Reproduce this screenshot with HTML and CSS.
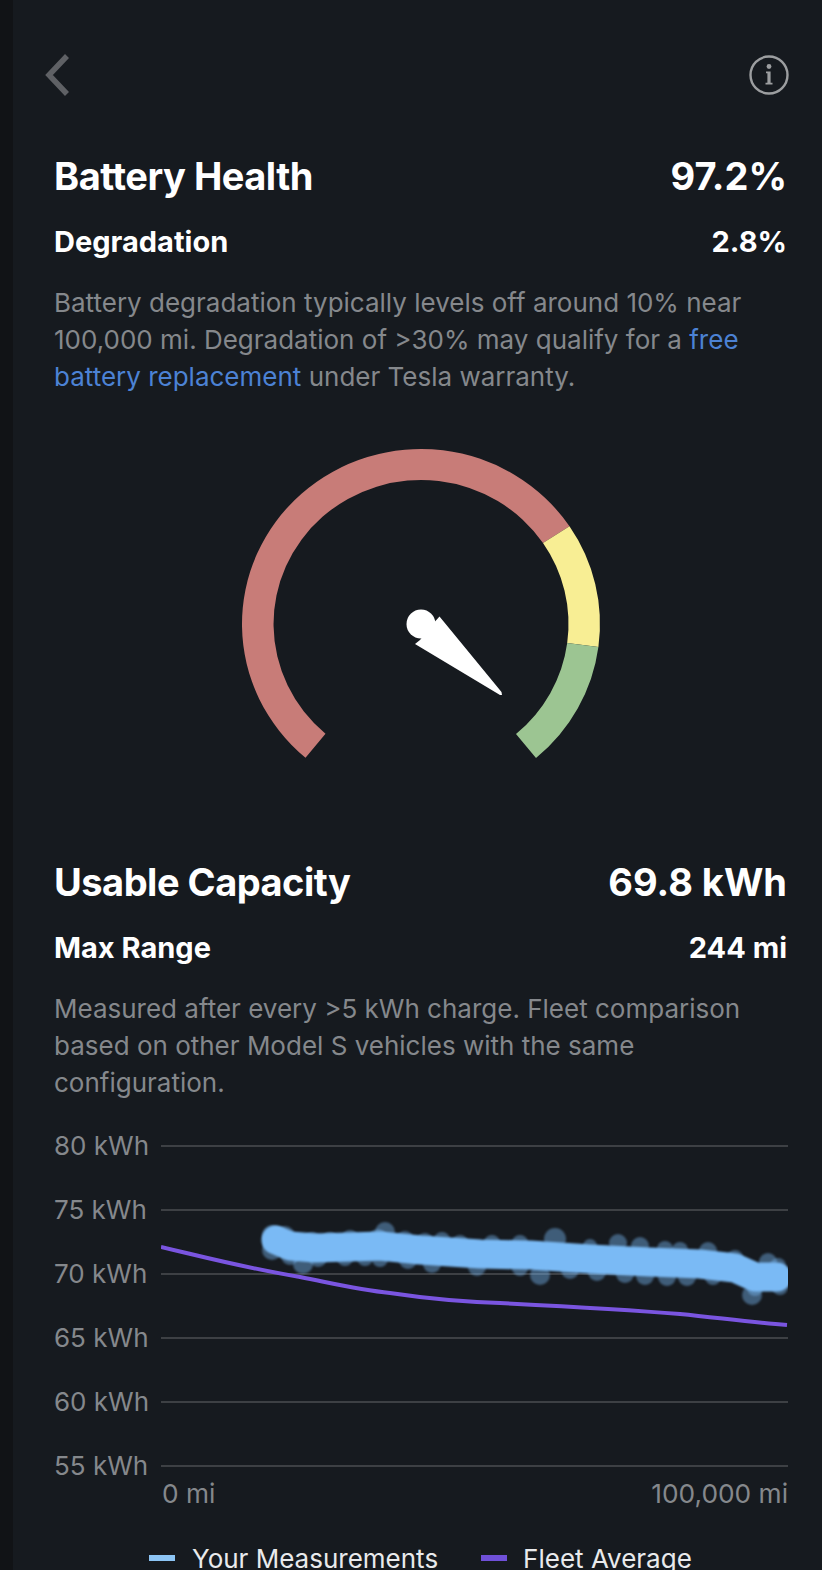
FILE: index.html
```html
<!DOCTYPE html>
<html lang="en">
<head>
<meta charset="utf-8">
<title>Battery Health</title>
<link rel="stylesheet" href="styles.css">
</head>
<body>
<main class="screen">
  <header class="topbar">
    <svg class="back-icon" viewBox="0 0 30 44" width="30" height="44"><polyline points="23,3 5,22 23,41"/></svg>
    <svg class="info-icon" viewBox="0 0 40 40" width="40" height="40">
      <circle class="info-ring" cx="20" cy="20" r="18.5"/>
      <circle class="info-mark" cx="20" cy="11.5" r="2.4"/>
      <path class="info-mark" d="M17 16.5h4.6v11.2h1.9v1.8h-7v-1.8h1.9v-9.4h-1.4z"/>
    </svg>
  </header>

  <section class="block block-first">
    <div class="title-row"><h1>Battery Health</h1><span>97.2%</span></div>
    <div class="sub-row"><h2>Degradation</h2><span>2.8%</span></div>
    <p class="note">Battery degradation typically levels off around 10% near 100,000 mi. Degradation of &gt;30% may qualify for a <a href="#">free battery replacement</a> under Tesla warranty.</p>
  </section>

  <svg class="gauge" viewBox="231 440 380 330" width="380" height="330">
    <path class="arc-red" d="M305.5 757.7 A179 175 0 1 1 569.5 526.3 L543 543 A147.5 144 0 1 0 325.5 733.7 Z"/>
    <path class="arc-yellow" d="M569.5 526.3 A179 175 0 0 1 598.4 647 L567.2 643 A147.5 144 0 0 0 543 543 Z"/>
    <path class="arc-green" d="M598.4 647 A179 175 0 0 1 536 758 L516 734 A147.5 144 0 0 0 567.2 643 Z"/>
    <circle class="needle" cx="421" cy="624" r="14.5"/>
    <polygon class="needle" points="439.5,616.5 501.5,692 502,695 500,695 415,644 420,640 435,621.5"/>
  </svg>

  <section class="block block-second">
    <div class="title-row"><h1>Usable Capacity</h1><span>69.8 kWh</span></div>
    <div class="sub-row"><h2>Max Range</h2><span>244 mi</span></div>
    <p class="note">Measured after every &gt;5 kWh charge. Fleet comparison based on other Model S vehicles with the same configuration.</p>
  </section>

  <section class="chart">
    <div class="chart-row"><span>80 kWh</span><i></i></div>
    <div class="chart-row"><span>75 kWh</span><i></i></div>
    <div class="chart-row"><span>70 kWh</span><i></i></div>
    <div class="chart-row"><span>65 kWh</span><i></i></div>
    <div class="chart-row"><span>60 kWh</span><i></i></div>
    <div class="chart-row"><span>55 kWh</span><i></i></div>
    <div class="axis"><span>0 mi</span><span>100,000 mi</span></div>

    <svg class="plot" viewBox="161 1134 627 344" width="627" height="344">
      <g class="dots">
        <circle cx="272" cy="1235" r="10"/><circle cx="285" cy="1236" r="10"/><circle cx="272" cy="1250" r="10"/><circle cx="290" cy="1256" r="9"/>
        <circle cx="303" cy="1264" r="10"/><circle cx="318" cy="1258" r="9"/><circle cx="312" cy="1240" r="8"/><circle cx="330" cy="1240" r="8"/>
        <circle cx="350" cy="1238" r="8"/><circle cx="345" cy="1258" r="8"/><circle cx="365" cy="1258" r="8"/><circle cx="385" cy="1232" r="10"/>
        <circle cx="378" cy="1238" r="9"/><circle cx="380" cy="1259" r="8"/><circle cx="405" cy="1239" r="8"/><circle cx="408" cy="1260" r="9"/>
        <circle cx="425" cy="1241" r="8"/><circle cx="432" cy="1264" r="9"/><circle cx="442" cy="1240" r="8"/><circle cx="460" cy="1243" r="8"/>
        <circle cx="477" cy="1267" r="9"/><circle cx="492" cy="1243" r="8"/><circle cx="520" cy="1243" r="8"/><circle cx="520" cy="1268" r="8"/>
        <circle cx="540" cy="1275" r="10"/><circle cx="555" cy="1239" r="11"/><circle cx="570" cy="1270" r="9"/><circle cx="590" cy="1246" r="7"/>
        <circle cx="597" cy="1272" r="9"/><circle cx="618" cy="1243" r="9"/><circle cx="625" cy="1274" r="9"/><circle cx="640" cy="1246" r="9"/>
        <circle cx="645" cy="1276" r="9"/><circle cx="665" cy="1249" r="8"/><circle cx="667" cy="1277" r="9"/><circle cx="680" cy="1250" r="8"/>
        <circle cx="687" cy="1277" r="9"/><circle cx="708" cy="1251" r="9"/><circle cx="713" cy="1277" r="8"/><circle cx="735" cy="1258" r="8"/>
        <circle cx="752" cy="1295" r="10"/><circle cx="755" cy="1288" r="8"/><circle cx="768" cy="1262" r="9"/><circle cx="778" cy="1266" r="8"/>
        <circle cx="780" cy="1287" r="8"/>
      </g>
      <polyline class="band" points="276,1240 290,1246 315,1248 350,1247 380,1246 420,1250 480,1254 530,1255 590,1259 650,1262 700,1264 735,1268 755,1277 777,1277"/>
      <path class="fleet" d="M161 1247 C200 1256 240 1267 300 1277 C340 1285 360 1290 390 1293 C430 1299 470 1302 500 1303 C560 1306 620 1309 680 1314 C720 1318 750 1322 787 1325"/>
    </svg>
  </section>

  <footer class="legend">
    <b class="swatch swatch-blue"></b><span>Your Measurements</span>
    <b class="swatch swatch-purple"></b><span>Fleet Average</span>
  </footer>
</main>
</body>
</html>
```

FILE: styles.css
```css
* { box-sizing: border-box; }
html, body { margin: 0; height: 1570px; overflow: hidden; background: #111316; }
body { font-family: Inter, "Liberation Sans", sans-serif; }
.screen { height: 1570px; margin-left: 13px; padding: 50px 34px 0 41px; background: #161a1f; overflow: hidden; }

.topbar { display: flex; justify-content: space-between; align-items: center; height: 50px; margin-left: -10px; margin-right: -1px; }
.back-icon polyline { fill: none; stroke: #5f6165; stroke-width: 5.5; }
.info-icon .info-ring { fill: none; stroke: #9c9ea0; stroke-width: 2.4; }
.info-icon .info-mark { fill: #9c9ea0; }

.block-first { margin-top: 54px; }
.block-second { margin-top: 90px; }

.title-row, .sub-row { display: flex; justify-content: space-between; align-items: center; color: #fff; padding-right: 1px; }
.title-row { height: 44px; font-size: 38px; font-weight: 700; letter-spacing: -0.5px; }
.title-row span { letter-spacing: 0; }
.sub-row { height: 40px; margin-top: 23.5px; font-size: 29px; font-weight: 700; }
h1, h2 { margin: 0; font: inherit; letter-spacing: inherit; }

.note { margin: 22.5px 0 0; font-size: 26px; line-height: 37px; color: #85888c; }
.note a { color: #4c82d4; text-decoration: none; }

.gauge { display: block; margin: 45px auto 0; }
.arc-red { fill: #c87c78; }
.arc-yellow { fill: #f8ee94; }
.arc-green { fill: #9cc592; }
.needle { fill: #fff; }

.chart { position: relative; margin-top: 33px; display: flex; flex-direction: column; gap: 40px; }
.chart-row { display: flex; align-items: center; height: 24px; font-size: 26px; line-height: 24px; color: #85888c; }
.chart-row span { width: 107px; flex: none; }
.chart-row i { flex: 1; height: 2px; background: #3d4044; }
.axis { display: flex; justify-content: space-between; height: 28px; margin: -38px 0 0 108px; font-size: 26.3px; line-height: 28px; color: #85888c; }
.plot { position: absolute; left: 107px; top: 0; }
.dots { filter: blur(.8px); }
.dots circle { fill: #7abaf5; fill-opacity: .42; }
.band { fill: none; stroke: #7abaf5; stroke-width: 29; stroke-linecap: round; stroke-linejoin: round; filter: blur(1px); }
.fleet { fill: none; stroke: #7a55e0; stroke-width: 4; }

.legend { display: flex; align-items: center; height: 30px; margin-top: 35px; margin-left: 95px; font-size: 26px; color: #e9eaec; }
.swatch { width: 26px; height: 6px; flex: none; }
.swatch-blue { background: #8cc4f4; margin-right: 17px; }
.swatch-purple { background: #6f50d8; margin: 0 16px 0 43px; }
```
